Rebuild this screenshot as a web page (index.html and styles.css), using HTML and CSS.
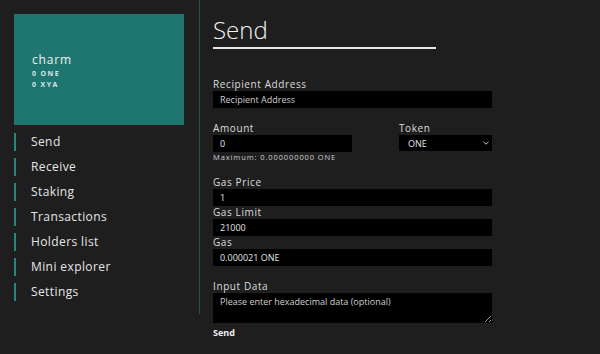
FILE: index.html
```html
<!DOCTYPE html>
<html lang="en">

<head>
	<meta charset="UTF-8">
	<meta name="viewport" content="width=device-width, initial-scale=1.0">
	<title>Wallet - Send</title>
	<link rel="stylesheet" href="styles.css">
</head>

<body>
	<div class="app">
		<aside class="sidebar">
			<div class="account">
				<div class="account-name">charm</div>
				<div class="balance">0 ONE</div>
				<div class="balance">0 XYA</div>
			</div>
			<ul class="nav">
				<li>Send</li>
				<li>Receive</li>
				<li>Staking</li>
				<li>Transactions</li>
				<li>Holders list</li>
				<li>Mini explorer</li>
				<li>Settings</li>
			</ul>
		</aside>

		<main class="content">
			<h1>Send</h1>
			<form id="sendForm">
				<div class="field">
					<label for="recipient">Recipient Address</label>
					<input type="text" id="recipient" placeholder="Recipient Address">
				</div>

				<div class="row">
					<div class="field amount">
						<label for="amount">Amount</label>
						<input type="text" id="amount" value="0">
						<small>Maximum: 0.000000000 ONE</small>
					</div>
					<div class="field token">
						<label for="token">Token</label>
						<div class="select-wrap">
							<select id="token">
								<option>ONE</option>
								<option>XYA</option>
							</select>
							<svg class="chevron" width="6" height="4" viewBox="0 0 6 4">
								<path d="M0.5 0.8 L3 3.2 L5.5 0.8" fill="none" stroke="#c8c8c8" stroke-width="1"/>
							</svg>
						</div>
					</div>
				</div>

				<div class="field">
					<label for="gasPrice">Gas Price</label>
					<input type="text" id="gasPrice" value="1">
					<label for="gasLimit">Gas Limit</label>
					<input type="text" id="gasLimit" value="21000">
					<label for="gas">Gas</label>
					<input type="text" id="gas" value="0.000021 ONE" readonly>
				</div>

				<div class="field data">
					<label for="inputData">Input Data</label>
					<textarea id="inputData" placeholder="Please enter hexadecimal data (optional)"></textarea>
				</div>

				<button type="submit">Send</button>
			</form>
		</main>
	</div>
</body>

</html>
```

FILE: styles.css
```css
body {
	font-family: "Open Sans", "Noto Sans", sans-serif;
	margin: 0;
	background-color: #1e1e1e;
	color: #e2e2e2;
}

.app {
	display: flex;
	align-items: flex-start;
	height: 354px;
}

/* sidebar */

.sidebar {
	width: 200px;
	padding: 14px 0 13px;
	border-right: 1px solid #24524f;
	box-sizing: border-box;
}

.account {
	margin: 0 15px 0 14px;
	height: 111px;
	padding: 38px 18px 0;
	box-sizing: border-box;
	background-color: #1f7671;
}

.account-name {
	font-size: 12px;
	line-height: 16px;
	letter-spacing: 0.8px;
	color: #f0f0f0;
}

.balance {
	font-size: 7px;
	font-weight: 700;
	line-height: 11px;
	letter-spacing: 1.4px;
	color: #d6e6e4;
}

.balance:first-of-type {
	margin-top: 3px;
}

.nav {
	list-style-type: none;
	margin: 8px 0 0 14px;
	padding: 0;
}

.nav li {
	height: 18px;
	line-height: 18px;
	margin-bottom: 7px;
	padding-left: 15px;
	border-left: 2px solid #2a8580;
	font-size: 12px;
	letter-spacing: 0.4px;
	color: #e6e6e6;
}

.nav li:last-child {
	margin-bottom: 0;
}

/* main */

.content {
	padding: 15px 0 0 13px;
}

h1 {
	width: 223px;
	margin: 0 0 29px;
	padding-bottom: 2px;
	border-bottom: 2px solid #e6e6e6;
	font-size: 24px;
	font-weight: 300;
	line-height: 30px;
	color: #f2f2f2;
}

form {
	width: 279px;
}

.field {
	display: flex;
	flex-direction: column;
	margin-bottom: 14px;
}

.field.data {
	margin-bottom: 4px;
}

label {
	font-size: 10px;
	line-height: 13px;
	letter-spacing: 0.6px;
	color: #dcdcdc;
}

input,
select,
textarea {
	display: block;
	width: 100%;
	height: 17px;
	padding: 0 7px;
	border: none;
	border-radius: 0;
	box-sizing: border-box;
	background-color: #000;
	color: #e6e6e6;
	font-family: inherit;
	font-size: 9px;
	outline: none;
}

input::placeholder,
textarea::placeholder {
	color: #cfcfcf;
}

textarea {
	height: 30px;
	padding: 3px 7px;
	line-height: 12px;
	resize: vertical;
}

.row {
	display: flex;
	justify-content: space-between;
}

.amount {
	width: 139px;
}

.token {
	width: 93px;
}

small {
	font-size: 7.5px;
	line-height: 10px;
	letter-spacing: 0.9px;
	color: #cfcfcf;
}

.select-wrap {
	position: relative;
}

select {
	appearance: none;
	height: 16px;
	padding-left: 9px;
}

.chevron {
	position: absolute;
	right: 3px;
	top: 6px;
	pointer-events: none;
}

button {
	display: block;
	padding: 0;
	border: none;
	background: none;
	color: #f0f0f0;
	font-family: inherit;
	font-size: 9px;
	font-weight: 700;
	line-height: 12px;
	cursor: pointer;
}
```
